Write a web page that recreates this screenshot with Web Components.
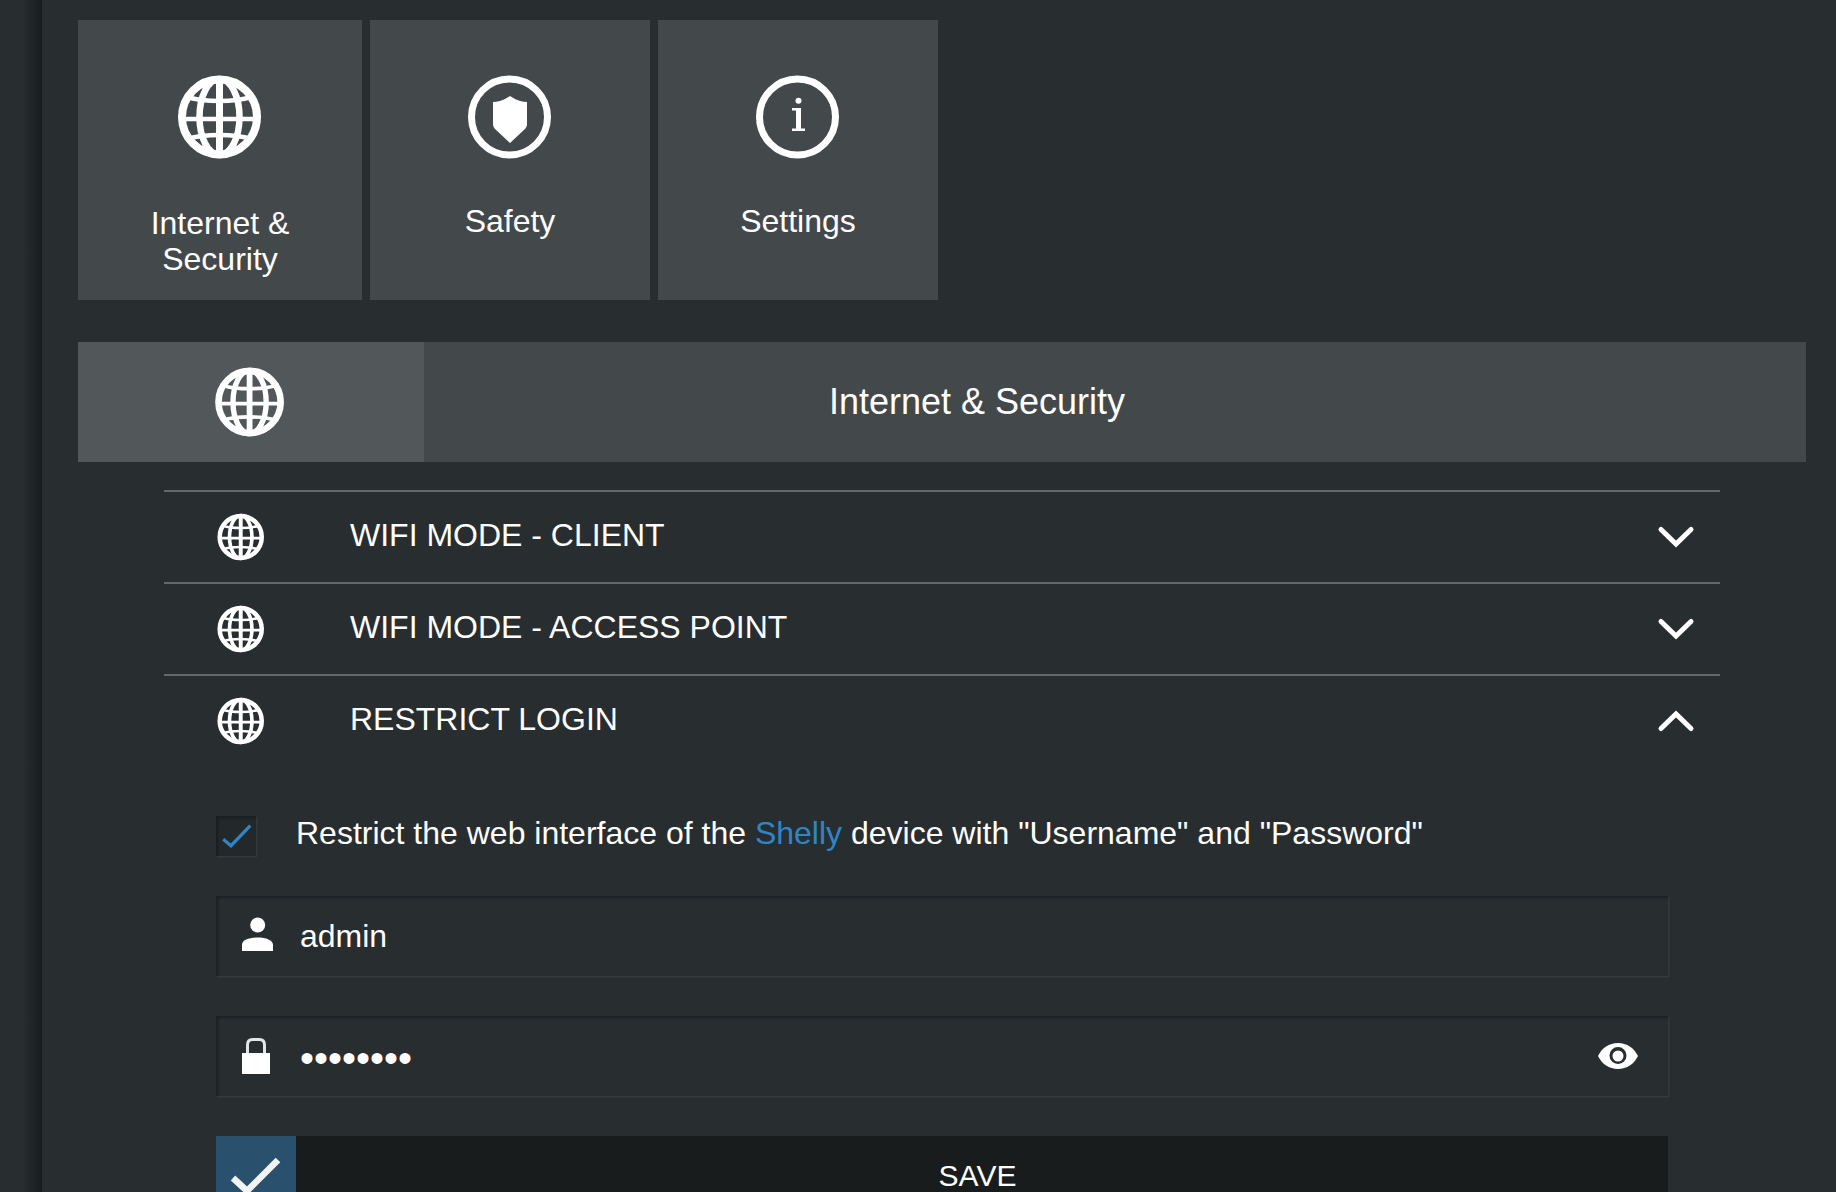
<!DOCTYPE html>
<html lang="en">
<head>
<meta charset="utf-8">
<title>Shelly</title>
<style>
    html, body { margin: 0; height: 100%; overflow: hidden; background: #282d30; }
    body { font-family: "Liberation Sans", Arial, sans-serif; color: #fff; }
</style>
</head>
<body>
<shelly-app>
    <tile-bar>
        <menu-tile icon="globe" style="--label-gap: 47px; --tile-width: 284px">Internet &amp;<br>Security</menu-tile>
        <menu-tile icon="shield">Safety</menu-tile>
        <menu-tile icon="info">Settings</menu-tile>
    </tile-bar>
    <section-header icon="globe">Internet &amp; Security</section-header>
    <accordion-list>
        <accordion-row label="WIFI MODE - CLIENT"></accordion-row>
        <accordion-row label="WIFI MODE - ACCESS POINT"></accordion-row>
        <accordion-row label="RESTRICT LOGIN" open>
            <login-form></login-form>
        </accordion-row>
    </accordion-list>
</shelly-app>

<script>
const ICONS = {
    globe: `<svg viewBox="0 0 82 82" fill="none" stroke="currentColor">
        <circle cx="40.500" cy="41" r="37.500" stroke-width="8"/>
        <ellipse cx="40.500" cy="41" rx="20" ry="38" stroke-width="6.500"/>
        <path d="M40.500 3v76" stroke-width="7"/>
        <path d="M2 43h77" stroke-width="4.500"/>
        <path d="M8 21c10 3 20 4 32.500 4s22-1 32-4M8 63c10-3 20-4 32.500-4s22 1 32 4" stroke-width="4.500"/>
    </svg>`,
    shield: `<svg viewBox="0 0 82 82" fill="none">
        <circle cx="40.500" cy="41" r="38" stroke="currentColor" stroke-width="7"/>
        <path fill="currentColor" d="M41 20l5 3c4 2 8 3 12 3v22c0 2-1 4-2 5L41 67 26 53c-1-1-2-3-2-5V26c4 0 8-1 12-3z"/>
    </svg>`,
    info: `<svg viewBox="0 0 82 82" fill="none">
        <circle cx="40.500" cy="41" r="38" stroke="currentColor" stroke-width="7"/>
        <g fill="currentColor">
            <circle cx="41.500" cy="24.700" r="3"/>
            <rect x="39" y="32" width="5" height="22"/>
            <rect x="35" y="32" width="6" height="2.500"/>
            <rect x="35" y="52.500" width="13" height="2.500"/>
        </g>
    </svg>`,
    chevronDown: `<svg viewBox="0 0 36 22" fill="none" stroke="currentColor" stroke-width="5" stroke-linecap="round" stroke-linejoin="miter"><path d="M3 3.500L18 18 33 3.500"/></svg>`,
    chevronUp: `<svg viewBox="0 0 36 22" fill="none" stroke="currentColor" stroke-width="5" stroke-linecap="round" stroke-linejoin="miter"><path d="M3 18.500L18 4 33 18.500"/></svg>`,
    user: `<svg viewBox="0 0 31 34" fill="currentColor"><circle cx="15.700" cy="8" r="7.500"/><path d="M0 34v-6c0-5 7-7.500 15.500-7.500S31 23 31 28v6z"/></svg>`,
    lock: `<svg viewBox="0 0 28 36" fill="none"><path d="M5.500 16V7c0-3.500 2-5.500 5-5.500h7c3 0 5 2 5 5.500v9" stroke="#e4e5e6" stroke-width="3"/><rect y="15" width="28" height="21" fill="#fff"/></svg>`,
    eye: `<svg viewBox="0 0 40 26" fill="currentColor"><path fill-rule="evenodd" d="M20 0C11 0 4 5 0 13c4 8 11 13 20 13s16-5 20-13C36 5 29 0 20 0zm0 21a8.500 8.500 0 1 1 0-17 8.500 8.500 0 0 1 0 17zm0-13.500a5.500 5.500 0 1 0 0 11 5.500 5.500 0 0 0 0-11z"/></svg>`,
    check: `<svg viewBox="0 0 80 80" fill="none" stroke="currentColor" stroke-width="6.500"><path d="M17 42l14 13 31-31"/></svg>`,
    tick: `<svg viewBox="0 0 40 40" fill="none" stroke="currentColor" stroke-width="3.200"><path d="M7.300 23.300l7.700 6.400L34.300 9.700"/></svg>`
};

class ShellyApp extends HTMLElement {
    constructor() {
        super();
        this.attachShadow({ mode: 'open' });
        this.shadowRoot.innerHTML = `
            <style>
                :host { display: flex; height: 100%; }
                .side {
                    width: 42px;
                    flex: none;
                    background: linear-gradient(to right, #282d30 0, #282d30 22px, #191d1f 42px);
                }
                main {
                    flex: 1;
                    min-width: 0;
                    padding: 20px 30px 0 36px;
                }
            </style>
            <div class="side"></div>
            <main><slot></slot></main>
        `;
    }
}

class TileBar extends HTMLElement {
    constructor() {
        super();
        this.attachShadow({ mode: 'open' });
        this.shadowRoot.innerHTML = `
            <style>
                :host { display: flex; gap: 8px; margin-bottom: 42px; }
            </style>
            <slot></slot>
        `;
    }
}

class MenuTile extends HTMLElement {
    constructor() {
        super();
        this.attachShadow({ mode: 'open' });
        this.shadowRoot.innerHTML = `
            <style>
                :host {
                    display: flex;
                    flex-direction: column;
                    align-items: center;
                    box-sizing: border-box;
                    width: var(--tile-width, 280px);
                    height: 280px;
                    padding-top: 56px;
                    background: #43484b;
                    font-size: 32px;
                    line-height: 36px;
                    text-align: center;
                }
                .icon { width: 82px; height: 82px; margin-bottom: var(--label-gap, 45px); }
                svg { display: block; width: 100%; height: 100%; overflow: visible; }
            </style>
            <div class="icon">${ICONS[this.getAttribute('icon')]}</div>
            <div><slot></slot></div>
        `;
    }
}

class SectionHeader extends HTMLElement {
    constructor() {
        super();
        this.attachShadow({ mode: 'open' });
        this.shadowRoot.innerHTML = `
            <style>
                :host {
                    display: flex;
                    height: 120px;
                    background: #43484b;
                    font-size: 36px;
                    margin-bottom: 28px;
                }
                .icon {
                    width: 346px;
                    flex: none;
                    background: #52575a;
                    display: flex;
                    align-items: center;
                    justify-content: center;
                    padding-right: 2px;
                    box-sizing: border-box;
                }
                svg { display: block; width: 68px; height: 68px; overflow: visible; }
                .title {
                    flex: 1;
                    display: flex;
                    align-items: center;
                    justify-content: center;
                    padding-right: 276px;
                }
            </style>
            <div class="icon">${ICONS[this.getAttribute('icon')]}</div>
            <div class="title"><slot></slot></div>
        `;
    }
}

class AccordionList extends HTMLElement {
    constructor() {
        super();
        this.attachShadow({ mode: 'open' });
        this.shadowRoot.innerHTML = `
            <style>
                :host { display: block; margin: 0 86px; }
            </style>
            <slot></slot>
        `;
    }
}

class AccordionRow extends HTMLElement {
    constructor() {
        super();
        this.attachShadow({ mode: 'open' });
        const open = this.hasAttribute('open');
        this.shadowRoot.innerHTML = `
            <style>
                :host { display: block; border-top: 2px solid #64686b; }
                .head {
                    display: flex;
                    align-items: center;
                    height: 90px;
                    padding: 0 26px 0 54px;
                    font-size: 32px;
                }
                .globe { width: 46px; height: 46px; flex: none; margin-right: 86px; }
                .label { flex: 1; padding-bottom: 4px; }
                .chevron { width: 36px; height: 22px; flex: none; }
                svg { display: block; width: 100%; height: 100%; overflow: visible; }
            </style>
            <div class="head">
                <div class="globe">${ICONS.globe}</div>
                <div class="label">${this.getAttribute('label')}</div>
                <div class="chevron">${open ? ICONS.chevronUp : ICONS.chevronDown}</div>
            </div>
            <slot></slot>
        `;
    }
}

class TextField extends HTMLElement {
    constructor() {
        super();
        this.attachShadow({ mode: 'open' });
        this.shadowRoot.innerHTML = `
            <style>
                :host {
                    display: flex;
                    align-items: center;
                    box-sizing: border-box;
                    height: 80px;
                    background: #282d30;
                    box-shadow:
                        inset 2px 2px 3px #1c2022,
                        1px 1px 2px #3c4144;
                    font-size: 32px;
                }
                .lead { width: 84px; flex: none; }
                .value { flex: 1; }
                .trail { margin-right: 30px; }
                ::slotted(*) { display: block; }
            </style>
            <div class="lead"><slot name="icon"></slot></div>
            <div class="value"><slot></slot></div>
            <div class="trail"><slot name="action"></slot></div>
        `;
    }
}

class LoginForm extends HTMLElement {
    constructor() {
        super();
        this.attachShadow({ mode: 'open' });
        this.shadowRoot.innerHTML = `
            <style>
                :host {
                    display: flex;
                    flex-direction: column;
                    gap: 40px;
                    padding: 50px 52px 0 52px;
                    font-size: 32px;
                }
                .agree { display: flex; gap: 40px; height: 40px; }
                .box {
                    width: 40px;
                    height: 40px;
                    flex: none;
                    background: #23282a;
                    box-shadow: inset 2px 2px 3px #1a1e20, 1px 1px 2px #3a3f42;
                    color: #2f86c6;
                }
                .text { line-height: 36px; margin-top: -1px; white-space: nowrap; }
                .text span { color: #2f86c6; }
                svg { display: block; width: 100%; height: 100%; }
                .user { width: 31px; height: 34px; margin: 0 0 0 26px; transform: translateY(-2px); }
                .lock { width: 28px; height: 36px; margin: 0 0 0 26px; }
                .eye { width: 40px; height: 26px; }
                .dots { font-size: 40px; line-height: 40px; margin-top: 4px; }
                .save {
                    display: flex;
                    height: 80px;
                    background: #181c1d;
                    font-size: 30px;
                }
                .save .ok { width: 80px; flex: none; background: #29516d; color: #f2f3f3; }
                .save .name {
                    flex: 1;
                    display: flex;
                    align-items: center;
                    justify-content: center;
                    padding-right: 9px;
                }
            </style>
            <div class="agree">
                <div class="box">${ICONS.tick}</div>
                <div class="text">Restrict the web interface of the <span>Shelly</span> device with "Username" and "Password"</div>
            </div>
            <text-field>
                <div slot="icon" class="user">${ICONS.user}</div>
                <div>admin</div>
            </text-field>
            <text-field>
                <div slot="icon" class="lock">${ICONS.lock}</div>
                <div class="dots">••••••••</div>
                <div slot="action" class="eye">${ICONS.eye}</div>
            </text-field>
            <div class="save">
                <div class="ok">${ICONS.check}</div>
                <div class="name">SAVE</div>
            </div>
        `;
    }
}

customElements.define('shelly-app', ShellyApp);
customElements.define('tile-bar', TileBar);
customElements.define('menu-tile', MenuTile);
customElements.define('section-header', SectionHeader);
customElements.define('accordion-list', AccordionList);
customElements.define('accordion-row', AccordionRow);
customElements.define('text-field', TextField);
customElements.define('login-form', LoginForm);
</script>
</body>
</html>
